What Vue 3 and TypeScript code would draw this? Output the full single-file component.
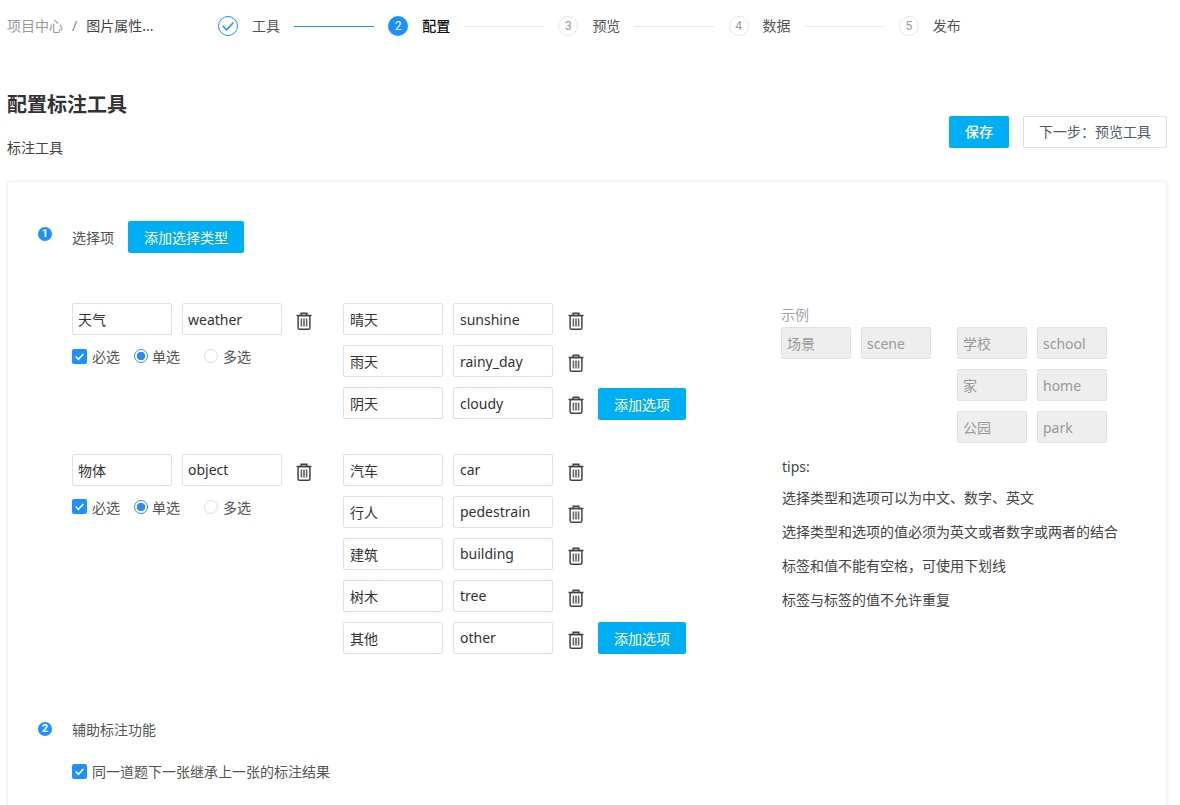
<script setup lang="ts">
interface Option { label: string; value: string }
interface Group { label: string; value: string; options: Option[] }

const steps = [
  { n: 1, label: '工具', state: 'done' },
  { n: 2, label: '配置', state: 'active' },
  { n: 3, label: '预览', state: 'todo' },
  { n: 4, label: '数据', state: 'todo' },
  { n: 5, label: '发布', state: 'todo' },
]

const groups: Group[] = [
  {
    label: '天气', value: 'weather',
    options: [
      { label: '晴天', value: 'sunshine' },
      { label: '雨天', value: 'rainy_day' },
      { label: '阴天', value: 'cloudy' },
    ],
  },
  {
    label: '物体', value: 'object',
    options: [
      { label: '汽车', value: 'car' },
      { label: '行人', value: 'pedestrain' },
      { label: '建筑', value: 'building' },
      { label: '树木', value: 'tree' },
      { label: '其他', value: 'other' },
    ],
  },
]

const example = [
  ['学校', 'school'],
  ['家', 'home'],
  ['公园', 'park'],
]

const tips = [
  '选择类型和选项可以为中文、数字、英文',
  '选择类型和选项的值必须为英文或者数字或两者的结合',
  '标签和值不能有空格\uFF0C可使用下划线',
  '标签与标签的值不允许重复',
]
</script>

<template>
  <div class="page">
    <header class="topbar">
      <nav class="crumbs">
        <span class="crumb-root">项目中心</span>
        <span class="crumb-sep">/</span>
        <span class="crumb-cur">图片属性...</span>
      </nav>
      <ol class="steps">
        <li v-for="(s, i) in steps" :key="s.n" class="step" :class="s.state">
          <span class="step-icon">
            <svg v-if="s.state === 'done'" width="20" height="20" viewBox="0 0 20 20" fill="none">
              <circle cx="10" cy="10" r="9.5" stroke="#1e90ff" />
              <path d="M4.8 10 8.6 13.8 15.4 6.4" stroke="#1e90ff" stroke-width="1.5" />
            </svg>
            <template v-else>{{ s.n }}</template>
          </span>
          <span class="step-label">{{ s.label }}</span>
          <span v-if="i < steps.length - 1" class="step-line"></span>
        </li>
      </ol>
    </header>

    <section class="head">
      <div>
        <h1 class="title">配置标注工具</h1>
        <p class="subtitle">标注工具</p>
      </div>
      <div class="head-actions">
        <button class="btn primary save">保存</button>
        <button class="btn ghost">下一步&#xFF1A;预览工具</button>
      </div>
    </section>

    <main class="card">
      <div class="sec-head">
        <span class="bullet first">1</span>
        <span class="sec-label">选择项</span>
        <button class="btn primary add-type">添加选择类型</button>
      </div>

      <div class="config">
        <div class="groups">
          <div v-for="g in groups" :key="g.value" class="group">
            <div class="group-main">
              <div class="row">
                <input class="field" :value="g.label" />
                <input class="field" :value="g.value" />
                <svg class="trash" width="16" height="18" viewBox="0 0 16 18" fill="none" stroke="#444" stroke-width="1.5">
                  <path d="M0.5 3.6H15.5M5.2 3.4V1.2H10.8V3.4" />
                  <rect x="2.1" y="3.6" width="11.8" height="13.7" rx="1.6" />
                  <path d="M5.4 6.6V14.4M8 6.6V14.4M10.6 6.6V14.4" stroke="#666" stroke-width="1.6" />
                </svg>
              </div>
              <div class="checks">
                <label class="check">
                  <span class="box"><svg width="15" height="15" viewBox="0 0 14 14" fill="none"><path d="M3.4 7 6 9.6 10.6 4.6" stroke="#fff" stroke-width="1.5" /></svg></span>
                  必选
                </label>
                <label class="radio on"><span class="dot"></span>单选</label>
                <label class="radio off"><span class="dot"></span>多选</label>
              </div>
            </div>
            <div class="options">
              <div v-for="(o, i) in g.options" :key="o.value" class="row">
                <input class="field" :value="o.label" />
                <input class="field" :value="o.value" />
                <svg class="trash opt-trash" width="16" height="18" viewBox="0 0 16 18" fill="none" stroke="#444" stroke-width="1.5">
                  <path d="M0.5 3.6H15.5M5.2 3.4V1.2H10.8V3.4" />
                  <rect x="2.1" y="3.6" width="11.8" height="13.7" rx="1.6" />
                  <path d="M5.4 6.6V14.4M8 6.6V14.4M10.6 6.6V14.4" stroke="#666" stroke-width="1.6" />
                </svg>
                <button v-if="i === g.options.length - 1" class="btn primary add-opt">添加选项</button>
              </div>
            </div>
          </div>
        </div>

        <aside class="side">
          <div class="ex-title">示例</div>
          <div class="ex-grid">
            <div class="ex-pair">
              <input class="field ex" value="场景" disabled />
              <input class="field ex" value="scene" disabled />
            </div>
            <div class="ex-list">
              <div v-for="e in example" :key="e[1]" class="ex-pair">
                <input class="field ex" :value="e[0]" disabled />
                <input class="field ex" :value="e[1]" disabled />
              </div>
            </div>
          </div>
          <div class="tips">
            <div class="tips-title">tips:</div>
            <p v-for="t in tips" :key="t" class="tip">{{ t }}</p>
          </div>
        </aside>
      </div>

      <div class="sec-head">
        <span class="bullet">2</span>
        <span class="sec-label">辅助标注功能</span>
      </div>
      <label class="check inherit">
        <span class="box"><svg width="15" height="15" viewBox="0 0 14 14" fill="none"><path d="M3.4 7 6 9.6 10.6 4.6" stroke="#fff" stroke-width="1.5" /></svg></span>
        同一道题下一张继承上一张的标注结果
      </label>
    </main>
  </div>
</template>

<style>
html, body { margin: 0; height: 805px; overflow: hidden; background: #fff; }
</style>

<style scoped>
.page {
  padding: 0 13px 0 7px;
  font-family: "Noto Sans", "Noto Sans CJK SC", sans-serif;
  font-size: 14px;
  color: #333;
  height: 805px;
  overflow: hidden;
  box-sizing: border-box;
}
.topbar { display: flex; align-items: center; height: 52px; }
.crumbs { width: 211px; display: flex; line-height: 20px; white-space: nowrap; }
.crumb-root { color: #999; }
.crumb-sep { color: #888; margin: 0 9px; }
.crumb-cur { color: #444; }
.steps { display: flex; list-style: none; margin: 0; padding: 0; }
.step { display: flex; align-items: center; width: 170.2px; }
.step:last-child { width: auto; }
.step-icon {
  width: 20px; height: 20px; border-radius: 50%;
  display: flex; align-items: center; justify-content: center;
  box-sizing: border-box; font-size: 12px; font-family: "Roboto", sans-serif;
  flex: none;
}
.step-label { margin-left: 14px; color: #555; line-height: 20px; white-space: nowrap; }
.step-line { width: 80px; height: 1px; margin-left: 14px; background: #eaeaea; }
.step.done .step-line { background: #1e90ff; }
.step.active .step-icon { background: #1e90ff; color: #fff; }
.step.active .step-label { color: #111; font-weight: 500; }
.step.todo .step-icon { border: 1px solid #e6e6e6; color: #999; }

.head { display: flex; justify-content: space-between; align-items: flex-start; height: 104px; }
.title { margin: 0; padding-top: 39px; font-size: 20px; line-height: 28px; font-weight: 700; color: #333; }
.subtitle { margin: 21px 0 0; line-height: 16px; color: #444; }
.head-actions { display: flex; gap: 14px; margin-top: 64px; }
.head-actions .btn { padding-bottom: 2px; }
.btn {
  height: 32px; border-radius: 2px; font: inherit; font-size: 14px;
  border: 0; padding: 0; cursor: pointer; box-sizing: border-box;
}
.primary { background: #00aef3; color: #fff; }
.ghost { width: 144px; background: #fff; border: 1px solid #dcdee2; color: #515a6e; }
.save { width: 60px; font-weight: 500; }

.card {
  margin-top: 25px;
  padding: 39px 30px 0;
  border: 1px solid #f0f0f0;
  box-shadow: 0 0 4px rgba(0, 0, 0, 0.06);
  height: 700px;
  box-sizing: border-box;
}
.sec-head { display: flex; align-items: center; height: 32px; }
.bullet {
  width: 14px; height: 14px; border-radius: 50%; background: #1e90ff; color: #fff;
  font-size: 11px; line-height: 14px; text-align: center; font-weight: 700;
  font-family: "Roboto", sans-serif; margin-right: 20px; flex: none;
}
.bullet.first { margin-top: -6px; }
.sec-label { color: #555; margin-right: 14px; }
.config { display: flex; margin: 50px 0 0 34px; height: 410px; }
.groups { width: 709px; flex: none; display: flex; flex-direction: column; gap: 34.6px; }
.group { display: flex; }
.group-main { width: 271px; flex: none; }
.options { display: flex; flex-direction: column; gap: 10px; }
.row { display: flex; align-items: center; gap: 10px; height: 32px; }
.field {
  width: 100px; height: 32px; box-sizing: border-box; padding: 0 5px;
  border: 1px solid #dfe1ea; border-radius: 2px; background: #fff;
  font: inherit; font-size: 14px; color: #333; outline: none;
}
.options .field { padding: 0 6px; }
.trash { margin-left: 4px; margin-top: 4px; flex: none; }
.opt-trash { margin-left: 5px; }
.add-opt { width: 88px; margin-left: 4px; margin-top: 1px; }
.add-type { width: 116px; }
.checks { display: flex; align-items: center; margin-top: 11px; height: 20px; color: #555; }
.check, .radio { display: flex; align-items: center; white-space: nowrap; }
.box {
  width: 15px; height: 15px; border-radius: 2px; background: #1e90ff;
  display: flex; align-items: center; justify-content: center; margin-right: 5px; flex: none;
}
.radio.on { margin-left: 14px; }
.radio.off { margin-left: 24px; }
.dot {
  width: 14px; height: 14px; box-sizing: border-box; border-radius: 50%;
  border: 1px solid #dcdee2; margin-right: 5px; background: #fff; flex: none;
}
.radio.on .dot { margin-right: 4px; border-color: #2d8cf0; background: radial-gradient(circle, #2d8cf0 0 4px, #fff 4.5px); }

.side { width: 340px; flex: none; }
.ex-title { color: #a0a5ad; line-height: 20px; margin: 2px 0 2px; }
.ex-grid { display: flex; gap: 26px; }
.ex-list { display: flex; flex-direction: column; gap: 10px; }
.ex-pair { display: flex; gap: 10px; }
.field.ex { width: 70px; background: #eee; color: #999; opacity: 1; -webkit-text-fill-color: #999; }
.tips { margin-left: 1px; }
.tips-title { margin-top: 14px; line-height: 20px; color: #444; }
.tip { margin: 14px 0 0; line-height: 20px; color: #444; white-space: nowrap; }
.tips-title + .tip { margin-top: 11px; }

.inherit { margin: 16px 0 0 34px; color: #555; }
</style>
